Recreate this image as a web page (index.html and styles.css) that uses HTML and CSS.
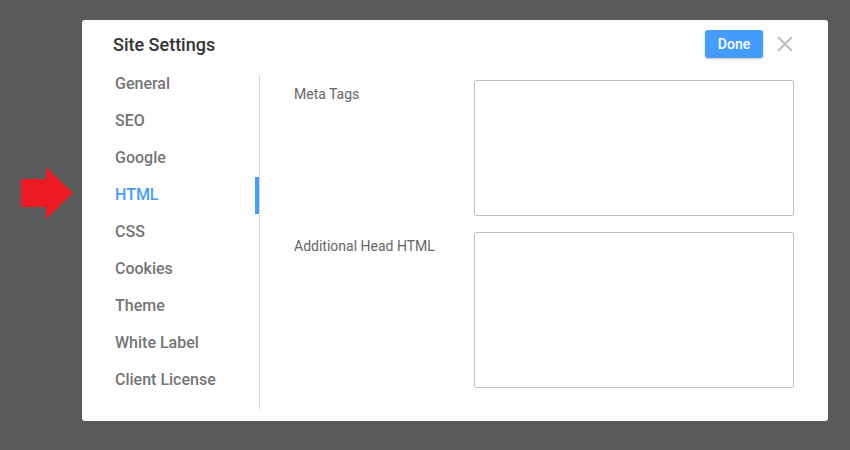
FILE: index.html
```html
<!DOCTYPE html>
<html>
<head>
<meta charset="utf-8">
<link rel="stylesheet" href="styles.css">
</head>
<body>
<div class="pointer">
  <svg width="54" height="54" viewBox="0 0 54 54"><polygon points="0,12 25,12 25,0 52,26 25,52 25,40 0,40" fill="#ed1c24"/></svg>
</div>
<div class="modal">
  <div class="header">
    <h1 class="title">Site Settings</h1>
    <div class="actions">
      <button class="done">Done</button>
      <svg class="close" width="16" height="16" viewBox="0 0 16 16"><path d="M1 1L15 15M15 1L1 15" stroke="#bdbdbd" stroke-width="2"/></svg>
    </div>
  </div>
  <div class="body">
    <div class="sidebar">
      <ul class="nav">
        <li>General</li>
        <li>SEO</li>
        <li>Google</li>
        <li class="active">HTML</li>
        <li>CSS</li>
        <li>Cookies</li>
        <li>Theme</li>
        <li>White Label</li>
        <li>Client License</li>
      </ul>
    </div>
    <div class="content">
      <div class="field">
        <label class="label">Meta Tags</label>
        <textarea class="input meta"></textarea>
      </div>
      <div class="field">
        <label class="label">Additional Head HTML</label>
        <textarea class="input head"></textarea>
      </div>
    </div>
  </div>
</div>
</body>
</html>
```
FILE: styles.css
```css
html, body {
  margin: 0;
  padding: 0;
  background: #5a5a5a;
  font-family: Roboto, "Liberation Sans", sans-serif;
}
body {
  width: 850px;
  height: 450px;
  overflow: hidden;
  position: relative;
}
.pointer {
  position: absolute;
  left: 21px;
  top: 167px;
  width: 54px;
  height: 54px;
}
.pointer svg { display: block; }
.modal {
  margin: 20px 0 0 82px;
  width: 746px;
  height: 401px;
  background: #fff;
  border-radius: 3px;
  box-sizing: border-box;
}
.header {
  display: flex;
  align-items: center;
  justify-content: space-between;
  padding: 10px 35px 0 31px;
  height: 28px;
}
.title {
  margin: 0;
  font-size: 18px;
  font-weight: 500;
  color: #333;
}
.actions {
  display: flex;
  align-items: center;
  gap: 14px;
}
.done {
  width: 58px;
  height: 28px;
  border: 0;
  border-radius: 3px;
  background: #449cff;
  color: #fff;
  font-family: Roboto, "Liberation Sans", sans-serif;
  font-size: 14px;
  font-weight: 500;
  padding: 0;
  box-shadow: 0 1px 2px rgba(0,0,0,0.25);
}
.close { display: block; }
.body {
  display: flex;
  margin-top: 17px;
}
.sidebar {
  width: 177px;
  height: 334px;
  border-right: 1px solid #d6d6d6;
  position: relative;
}
.nav {
  list-style: none;
  margin: -10px 0 0 0;
  padding: 0;
}
.nav li {
  position: relative;
  height: 37px;
  line-height: 37px;
  padding-left: 33px;
  font-size: 16px;
  font-weight: 500;
  color: #757575;
}
.nav li.active { color: #449cff; }
.nav li.active::after {
  content: "";
  position: absolute;
  right: 0;
  top: 1px;
  width: 4px;
  height: 37px;
  background: #449cff;
}
.content {
  flex: 1;
  padding: 5px 34px 0 34px;
  display: flex;
  flex-direction: column;
  gap: 16px;
}
.field {
  display: flex;
  align-items: flex-start;
}
.label {
  width: 180px;
  padding-top: 6px;
  font-size: 14px;
  color: #666;
  line-height: 16px;
}
.input {
  display: block;
  width: 320px;
  box-sizing: border-box;
  border: 1px solid #c2c2c2;
  border-radius: 2px;
  resize: none;
  margin: 0;
  padding: 0;
  background: #fff;
}
.meta { height: 136px; }
.head { height: 156px; }
```
